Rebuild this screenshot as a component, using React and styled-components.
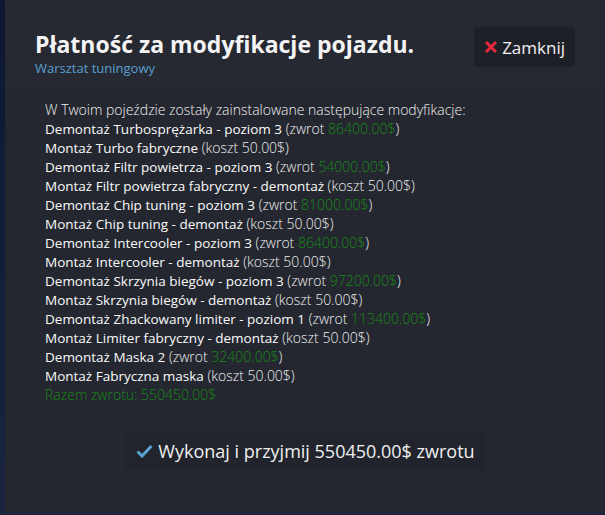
import React from "react";
import styled, { createGlobalStyle } from "styled-components";

const Global = createGlobalStyle`
  html, body { margin: 0; padding: 0; }
  body {
    width: 605px; height: 515px; overflow: hidden;
    background: linear-gradient(180deg, #0d1830 0%, #13203a 60%, #1a2440 100%);
    font-family: "Open Sans", "Noto Sans", sans-serif;
  }
`;

const Stage = styled.div`
  display: flex;
  height: 515px;
  padding-left: 5px;
  box-sizing: border-box;
`;

const Modal = styled.div`
  width: 600px;
  height: 513px;
  background: #24272f;
  display: flex;
  flex-direction: column;
`;

const Header = styled.div`
  background: #262932;
  height: 88px;
  box-sizing: border-box;
  padding: 27px 30px 0 30px;
  display: flex;
  justify-content: space-between;
  align-items: flex-start;
`;

const TitleBlock = styled.div`
  display: flex;
  flex-direction: column;
  padding-top: 3px;
`;

const Title = styled.h1`
  margin: 0;
  font-size: 23px;
  font-weight: 700;
  color: #f4f4f4;
  line-height: 29px;
`;

const Subtitle = styled.div`
  font-size: 13px;
  color: #5b9fcf;
  line-height: 16px;
  margin-top: 1px;
`;

const CloseButton = styled.button`
  display: flex;
  align-items: center;
  gap: 4px;
  height: 40px;
  padding: 0 10px;
  border: 0;
  border-radius: 4px;
  background: #1e2028;
  color: #f2f2f2;
  font-family: inherit;
  font-size: 17px;
`;

const Body = styled.div`
  padding: 12px 40px 0 40px;
  display: flex;
  flex-direction: column;
  font-size: 14px;
  line-height: 19px;
  color: #ececec;
`;

const Line = styled.div`
  height: 19px;
  white-space: nowrap;
  font-size: 14px;
  font-weight: ${(p) => (p.$light ? 300 : 400)};
  color: ${(p) => (p.$total ? "#178a17" : "#f0f0f0")};
`;

const Name = styled.span`
  color: #fafafa;
  font-size: 13.5px;
  font-weight: 450;
`;

const Note = styled.span`
  color: #f0f0f0;
  font-weight: 300;
`;

const Amount = styled.span`
  color: #178a17;
`;

const Footer = styled.div`
  display: flex;
  justify-content: center;
  margin-top: 28px;
`;

const ActionButton = styled.button`
  display: flex;
  align-items: center;
  gap: 5px;
  height: 38px;
  padding: 0 10px 0 11px;
  border: 0;
  border-radius: 4px;
  background: #21242c;
  color: #f0f0f0;
  font-family: inherit;
  font-size: 18px;
`;

const mods = [
  ["Demontaż Turbosprężarka - poziom 3", "zwrot", "86400.00$"],
  ["Montaż Turbo fabryczne", "koszt", "50.00$"],
  ["Demontaż Filtr powietrza - poziom 3", "zwrot", "54000.00$"],
  ["Montaż Filtr powietrza fabryczny - demontaż", "koszt", "50.00$"],
  ["Demontaż Chip tuning - poziom 3", "zwrot", "81000.00$"],
  ["Montaż Chip tuning - demontaż", "koszt", "50.00$"],
  ["Demontaż Intercooler - poziom 3", "zwrot", "86400.00$"],
  ["Montaż Intercooler - demontaż", "koszt", "50.00$"],
  ["Demontaż Skrzynia biegów - poziom 3", "zwrot", "97200.00$"],
  ["Montaż Skrzynia biegów - demontaż", "koszt", "50.00$"],
  ["Demontaż Zhackowany limiter - poziom 1", "zwrot", "113400.00$"],
  ["Montaż Limiter fabryczny - demontaż", "koszt", "50.00$"],
  ["Demontaż Maska 2", "zwrot", "32400.00$"],
  ["Montaż Fabryczna maska", "koszt", "50.00$"],
];

const XIcon = () => (
  <svg width="14" height="14" viewBox="0 0 14 14">
    <path d="M2 2 L12 12 M12 2 L2 12" stroke="#e8283a" strokeWidth="3" strokeLinecap="butt" />
  </svg>
);

const CheckIcon = () => (
  <svg width="17" height="14" viewBox="0 0 17 14">
    <path d="M1.5 7.5 L6 12 L15.5 2" stroke="#5aa3d3" strokeWidth="3" fill="none" />
  </svg>
);

export default function App() {
  return (
    <>
      <Global />
      <Stage>
        <Modal>
          <Header>
            <TitleBlock>
              <Title>Płatność za modyfikacje pojazdu.</Title>
              <Subtitle>Warsztat tuningowy</Subtitle>
            </TitleBlock>
            <CloseButton>
              <XIcon />
              Zamknij
            </CloseButton>
          </Header>
          <Body>
            <Line $light>W Twoim pojeździe zostały zainstalowane następujące modyfikacje:</Line>
            {mods.map(([name, kind, val], i) => (
              <Line key={i}>
                <Name>{name}</Name>{" "}
                <Note>
                  ({kind}{" "}
                  {kind === "zwrot" ? <Amount>{val}</Amount> : val})
                </Note>
              </Line>
            ))}
            <Line $total $light>Razem zwrotu: 550450.00$</Line>
          </Body>
          <Footer>
            <ActionButton>
              <CheckIcon />
              Wykonaj i przyjmij 550450.00$ zwrotu
            </ActionButton>
          </Footer>
        </Modal>
      </Stage>
    </>
  );
}
